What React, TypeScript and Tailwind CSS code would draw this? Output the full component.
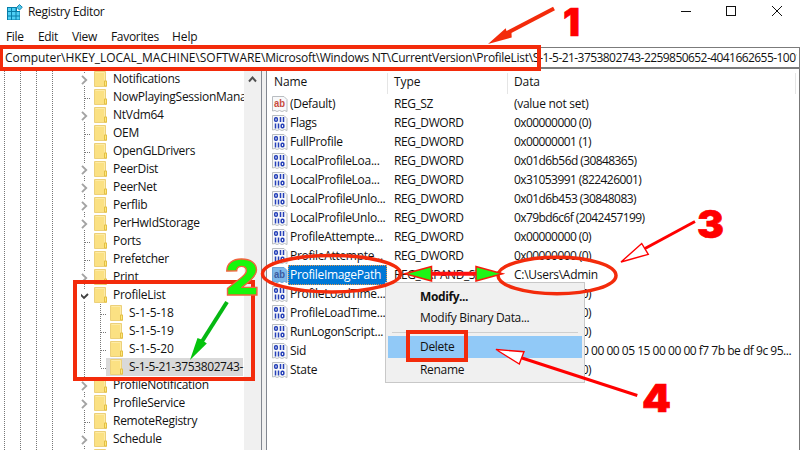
import React from "react";

type TreeNode = { label: string; state: "closed" | "open" | "leaf"; child?: boolean; selected?: boolean };

const tree: TreeNode[] = [
  { label: "Notifications", state: "closed" },
  { label: "NowPlayingSessionMana", state: "leaf" },
  { label: "NtVdm64", state: "closed" },
  { label: "OEM", state: "leaf" },
  { label: "OpenGLDrivers", state: "leaf" },
  { label: "PeerDist", state: "closed" },
  { label: "PeerNet", state: "closed" },
  { label: "Perflib", state: "closed" },
  { label: "PerHwIdStorage", state: "closed" },
  { label: "Ports", state: "leaf" },
  { label: "Prefetcher", state: "leaf" },
  { label: "Print", state: "closed" },
  { label: "ProfileList", state: "open" },
  { label: "S-1-5-18", state: "leaf", child: true },
  { label: "S-1-5-19", state: "leaf", child: true },
  { label: "S-1-5-20", state: "leaf", child: true },
  { label: "S-1-5-21-3753802743-", state: "leaf", child: true, selected: true },
  { label: "ProfileNotification", state: "closed" },
  { label: "ProfileService", state: "closed" },
  { label: "RemoteRegistry", state: "leaf" },
  { label: "Schedule", state: "closed" },
  { label: "", state: "leaf" },
];

const values = [
  ["(Default)", "REG_SZ", "(value not set)"],
  ["Flags", "REG_DWORD", "0x00000000 (0)"],
  ["FullProfile", "REG_DWORD", "0x00000001 (1)"],
  ["LocalProfileLoa...", "REG_DWORD", "0x01d6b56d (30848365)"],
  ["LocalProfileLoa...", "REG_DWORD", "0x31053991 (822426001)"],
  ["LocalProfileUnlo...", "REG_DWORD", "0x01d6b453 (30848083)"],
  ["LocalProfileUnlo...", "REG_DWORD", "0x79bd6c6f (2042457199)"],
  ["ProfileAttempte...", "REG_DWORD", "0x00000000 (0)"],
  ["ProfileAttempte...", "REG_DWORD", "0x00000000 (0)"],
  ["ProfileImagePath", "REG_EXPAND_SZ", "C:\\Users\\Admin"],
  ["ProfileLoadTime...", "REG_DWORD", "0x00000000 (0)"],
  ["ProfileLoadTime...", "REG_DWORD", "0x00000000 (0)"],
  ["RunLogonScript...", "REG_DWORD", "0x00000000 (0)"],
  ["Sid", "REG_BINARY", "01 05 00 00 00 00 00 05 15 00 00 00 f7 7b be df 9c 95..."],
  ["State", "REG_DWORD", "0x00000000 (0)"],
];

function Folder() {
  return (
    <svg width="14" height="18" viewBox="0 0 14 18" className="shrink-0">
      <path d="M.5 1.500h11v9.500h1v5.500H.5z" fill="#fbe183" stroke="#ecd07a" />
      <path d="M1.500 2.500h9v8" fill="none" stroke="#fdeba6" />
      <path d="M10.500 16v-5h2v5z" fill="#ffe97c" stroke="#e3bf45" />
    </svg>
  );
}

function Branch({ node }: { node: TreeNode }) {
  return (
    <svg width={node.child ? 29 : 13} height="18" className="shrink-0">
      {node.child ? (
        <g stroke="#777" strokeDasharray="1 1">
          <path d="M3.500 0v18" />
          <path d={node.selected ? "M19.500 0v10" : "M19.500 0v18"} />
          <path d="M20 10.500h6" />
        </g>
      ) : node.state === "leaf" ? (
        <path d="M3.500 0v18M4 10.500h6" stroke="#777" strokeDasharray="1 1" />
      ) : (
        <path d="M3.500 0v3M3.500 16v2" stroke="#777" strokeDasharray="1 1" />
      )}
      {node.state === "closed" && <path d="M1 5.800l4.200 4.200L1 14.200" fill="none" stroke="#a3a3a3" strokeWidth="1.900" />}
      {node.state === "open" && <path d="M-1 8l4 4 4-4" fill="none" stroke="#404040" strokeWidth="1.900" className="overflow-visible" />}
    </svg>
  );
}

function ValueIcon({ text, selected }: { text: boolean; selected: boolean }) {
  return (
    <svg width="16" height="16" viewBox="0 0 16 16" className="shrink-0">
      <path
        d="M.5.5h11.500l3 3v12l-2.500-1-2.500 1-2.500-1-2.500 1-2-1-2.500.5z"
        fill={selected ? "#7db8ea" : "#f8f9fa"}
        stroke={selected ? "#6aa3d6" : "#b9bdc1"}
      />
      {text ? (
        <text x="2" y="10.500" fontSize="10" fontWeight="700" textLength="11" lengthAdjust="spacingAndGlyphs" fill={selected ? "#3b5ba0" : "#c84b3c"} className="font-['Liberation_Sans',sans-serif] tracking-normal">
          ab
        </text>
      ) : (
        <g fill="none" stroke="#2540b8" strokeWidth="1.500">
          <rect x="2.700" y="2.800" width="2.600" height="3.400" rx="1" />
          <path d="M8.500 2v5M11.500 2v5M3.500 8.500v5M6.500 8.500v5" />
          <rect x="9.200" y="9.300" width="2.600" height="3.400" rx="1" />
        </g>
      )}
    </svg>
  );
}

function RegistryIcon() {
  return (
    <svg width="16" height="17" viewBox="0 0 16 17">
      <path d="M0 3h10v4h3v9H0z" fill="#087da8" />
      <g fill="#4fd0f5">
        <rect x="1" y="4" width="3" height="3" />
        <rect x="5" y="4" width="3.500" height="3" />
        <rect x="1" y="8" width="3" height="3.500" />
        <rect x="5" y="8" width="3.500" height="3.500" />
        <rect x="9.500" y="8" width="3" height="3.500" />
        <rect x="1" y="12.500" width="3" height="3" />
        <rect x="5" y="12.500" width="3.500" height="3" />
        <rect x="9.500" y="12.500" width="3" height="3" />
      </g>
      <path d="M12.500.5L15.300 3.300 12.500 6 9.800 3.300z" fill="#55c9ee" stroke="#1487b0" />
    </svg>
  );
}

function Annotations() {
  const digit = "font-['Inter','Open_Sans',sans-serif] font-black tracking-normal";
  return (
    <svg width="800" height="450" viewBox="0 0 800 450" className="pointer-events-none absolute left-0 top-0">
      <g fill="none" stroke="#f32b0b">
        <rect x="1" y="47" width="538" height="22" strokeWidth="4" />
        <rect x="75" y="282" width="178" height="97" strokeWidth="4" />
        <rect x="408" y="332" width="58" height="28" strokeWidth="4" />
        <ellipse cx="331.500" cy="273.700" rx="69" ry="18.300" strokeWidth="3.500" />
        <ellipse cx="557" cy="275.500" rx="59" ry="18.300" strokeWidth="3.500" />
        <path d="M554 8.500L505 34" strokeWidth="4" />
      </g>
      <path d="M488 44L505.700 28.300 506.500 31 511.500 33 511.700 37.500z" fill="#f32b0b" />
      <path d="M227 302L201 343" stroke="#05b812" strokeWidth="4" />
      <path d="M190 360L197.500 338 201.500 339.500 206.800 343.500z" fill="#05c40d" />
      <path d="M425 273.700H482" stroke="#ff1010" strokeWidth="4" />
      <path d="M405 273.700L431.500 266.500V281zM502.500 273.700L476 266.500V281z" fill="#1df516" stroke="#f51b0b" strokeWidth="1.500" />
      <g stroke="#ff0000" fill="#fff">
        <path d="M695 221.500L645 248.500" strokeWidth="3" />
        <path d="M621 262L641.700 243.500 648.300 254.300z" strokeWidth="1.400" />
        <path d="M637.300 395.500L522 358" strokeWidth="3" />
        <path d="M496 349.500L524 351.700 519.300 364z" strokeWidth="1.400" />
      </g>
      <g fill="#ff0000" stroke="#ff0000" strokeWidth="0.600" fontSize="38" className={digit}>
        <text x="563" y="35.500" textLength="17" lengthAdjust="spacingAndGlyphs">1</text>
        <text x="697" y="238" textLength="27" lengthAdjust="spacingAndGlyphs">3</text>
        <text x="642" y="411.500" textLength="29" lengthAdjust="spacingAndGlyphs">4</text>
      </g>
      <text x="225" y="294.500" fontSize="48" textLength="34" lengthAdjust="spacingAndGlyphs" fill="#16f70c" stroke="#f0643c" strokeWidth="1.300" className={digit}>2</text>
    </svg>
  );
}

export default function App() {
  return (
    <div className="relative flex h-[450px] w-[800px] flex-col overflow-hidden bg-white font-['Open_Sans','Noto_Sans',sans-serif] text-[12px] leading-[18px] tracking-[-0.32px] text-[#111]">
      <header className="flex h-[26px] shrink-0 items-center justify-between pl-[7px] pr-[17px]">
        <div className="flex h-6 items-center gap-[5px] self-start">
          <RegistryIcon />
          <span>Registry Editor</span>
        </div>
        <svg width="103" height="12" className="mb-1" fill="none" stroke="#111">
          <path d="M1 6.500h10M92 1l10 10M102 1L92 11" />
          <rect x="46.500" y="1.500" width="9" height="9" />
        </svg>
      </header>
      <nav className="flex h-[21px] shrink-0 items-center pl-[6px] pt-px tracking-[-0.32px]">
        <span className="w-8">File</span>
        <span className="w-[34px]">Edit</span>
        <span className="w-[39px]">View</span>
        <span className="w-[61px]">Favorites</span>
        <span className="tracking-[-0.1px]">Help</span>
      </nav>
      <div className="flex h-[22px] w-full shrink-0 items-center border-x border-b-2 border-t border-[#7b7b7b] pl-1 pr-[2px]">
        <div className="flex overflow-hidden whitespace-nowrap">
          <span className="tracking-[-0.05px]">Computer\HKEY_LOCAL_MACHINE\SOFTWARE\</span>
          <span className="tracking-[-0.28px]">Microsoft\Windows NT\CurrentVersion\ProfileList\S</span>
          <span className="tracking-[-0.56px]">-1-5-21-3753802743-2259850652-4041662655-1001</span>
        </div>
      </div>
      <main className="flex min-h-0 flex-1">
        <section className="flex w-[261px] shrink-0">
          <svg width="81" height="381" className="shrink-0" stroke="#777" strokeDasharray="1 1">
            <path d="M4.500 0v381M20.500 0v381M36.500 0v381M52.500 0v381" />
          </svg>
          <div className="flex w-[163px] flex-col overflow-hidden pt-px">
            {tree.map((node, i) => (
              <div key={i} className="flex h-[18px] shrink-0">
                <Branch node={node} />
                <div className={node.selected ? "-ml-1 mr-px flex flex-1 bg-[#d9d9d9] pl-1" : "flex flex-1"}>
                  <Folder />
                  <span
                    className={
                      node.selected
                        ? "ml-[5px] whitespace-nowrap tracking-[-0.4px]"
                        : node.child
                          ? "ml-[5px] whitespace-nowrap tracking-[-0.1px]"
                          : "ml-[5px] whitespace-nowrap tracking-[-0.28px]"
                    }
                  >
                    {node.label}
                  </span>
                </div>
              </div>
            ))}
          </div>
          <div className="flex flex-1 justify-center bg-[#f0f0f0] pt-[6px]">
            <svg width="9" height="8" fill="none" stroke="#505050" strokeWidth="1.900">
              <path d="M1 6.500l3.500-4L8 6.500" />
            </svg>
          </div>
        </section>
        <div className="w-[6px] shrink-0 border-x border-[#828790] bg-[#f0f0f0]" />
        <section className="flex min-w-0 flex-1 flex-col border-r border-[#777]">
          <div className="flex h-[25px] shrink-0 pl-[7px] pt-1 tracking-[-0.1px]">
            <span className="w-[114px] border-r border-[#e5e5e5]">Name</span>
            <span className="w-[120px] border-r border-[#e5e5e5] pl-[6px]">Type</span>
            <span className="w-[288px] border-r border-[#e5e5e5] pl-[6px]">Data</span>
          </div>
          {values.map(([name, type, data], i) => {
            const selected = name === "ProfileImagePath";
            return (
              <div key={i} className="flex h-[19px] shrink-0 items-center pl-[5px]">
                <div className="flex w-[122px] items-center">
                  <ValueIcon text={selected || i === 0} selected={selected} />
                  <span
                    className={
                      selected
                        ? "w-[99px] whitespace-nowrap border border-dotted border-[#e89a4c] bg-[#0078d7] pl-px text-white"
                        : "whitespace-nowrap pl-[2px] tracking-[-0.29px]"
                    }
                  >
                    {name}
                  </span>
                </div>
                <span className="w-[120px] tracking-[-0.42px]">{type}</span>
                <span
                  className={
                    data.startsWith("0x")
                      ? "whitespace-nowrap tracking-[-0.58px]"
                      : name === "Sid"
                        ? "whitespace-nowrap tracking-[-0.48px]"
                        : "whitespace-nowrap tracking-[-0.28px]"
                  }
                >
                  {data}
                </span>
              </div>
            );
          })}
        </section>
      </main>
      <div className="absolute left-[385px] top-[282px] flex h-[101px] w-[200px] flex-col border border-[#c8c8c8] bg-[#f0f0f0] px-[2px] pt-[2px]">
        <span className="h-[22px] pl-8 font-bold leading-[23px] tracking-[-0.4px]">Modify...</span>
        <span className="h-[22px] pl-8 leading-[22px]">Modify Binary Data...</span>
        <div className="mx-1 my-[3px] h-px shrink-0 bg-[#cfcfcf]" />
        <span className="h-[22px] bg-[#91c9f7] pl-8 leading-[22px]">Delete</span>
        <span className="h-[22px] pl-8 leading-[23px] tracking-[-0.3px]">Rename</span>
      </div>
      <Annotations />
    </div>
  );
}
